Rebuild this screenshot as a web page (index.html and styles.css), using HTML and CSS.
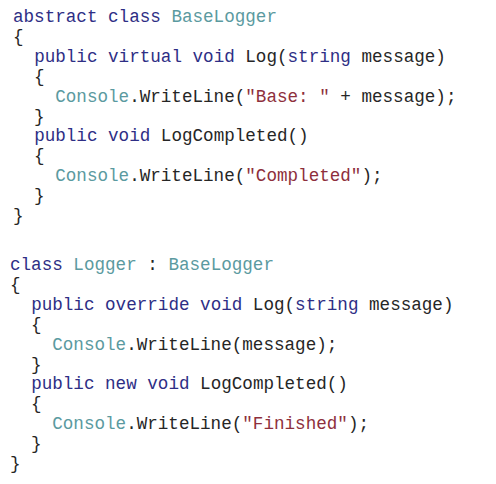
FILE: index.html
```html
<!DOCTYPE html>
<html>
<head>
<meta charset="utf-8">
<link rel="stylesheet" href="styles.css">
</head>
<body>
<div class="page">
<pre class="code code-base"><span class="kw">abstract</span> <span class="kw">class</span> <span class="ty">BaseLogger</span>
{
  <span class="kw">public</span> <span class="kw">virtual</span> <span class="kw">void</span> Log(<span class="kw">string</span> message)
  {
    <span class="ty">Console</span>.WriteLine(<span class="st">"Base: "</span> + message);
  }
  <span class="kw">public</span> <span class="kw">void</span> LogCompleted()
  {
    <span class="ty">Console</span>.WriteLine(<span class="st">"Completed"</span>);
  }
}</pre>
<pre class="code code-derived"><span class="kw">class</span> <span class="ty">Logger</span> : <span class="ty">BaseLogger</span>
{
  <span class="kw">public</span> <span class="kw">override</span> <span class="kw">void</span> Log(<span class="kw">string</span> message)
  {
    <span class="ty">Console</span>.WriteLine(message);
  }
  <span class="kw">public</span> <span class="kw">new</span> <span class="kw">void</span> LogCompleted()
  {
    <span class="ty">Console</span>.WriteLine(<span class="st">"Finished"</span>);
  }
}</pre>
</div>
</body>
</html>
```
FILE: styles.css
```css
html, body {
  margin: 0;
  padding: 0;
  background: #ffffff;
}
.page {
  width: 496px;
  height: 484px;
  display: flex;
  flex-direction: column;
  gap: 29px;
  padding-top: 8px;
  box-sizing: border-box;
}
.code {
  margin: 0;
  font-family: "Courier New", "Nimbus Mono PS", "Nimbus Mono L", "FreeMono", "Liberation Mono", monospace;
  font-size: 17.6px;
  line-height: 19.9px;
  color: #262626;
  white-space: pre;
}
.code-base {
  padding-left: 13px;
}
.code-derived {
  padding-left: 10px;
}
.kw {
  color: #2e2e85;
}
.ty {
  color: #5b9aa0;
}
.st {
  color: #8e2f3c;
}
```
